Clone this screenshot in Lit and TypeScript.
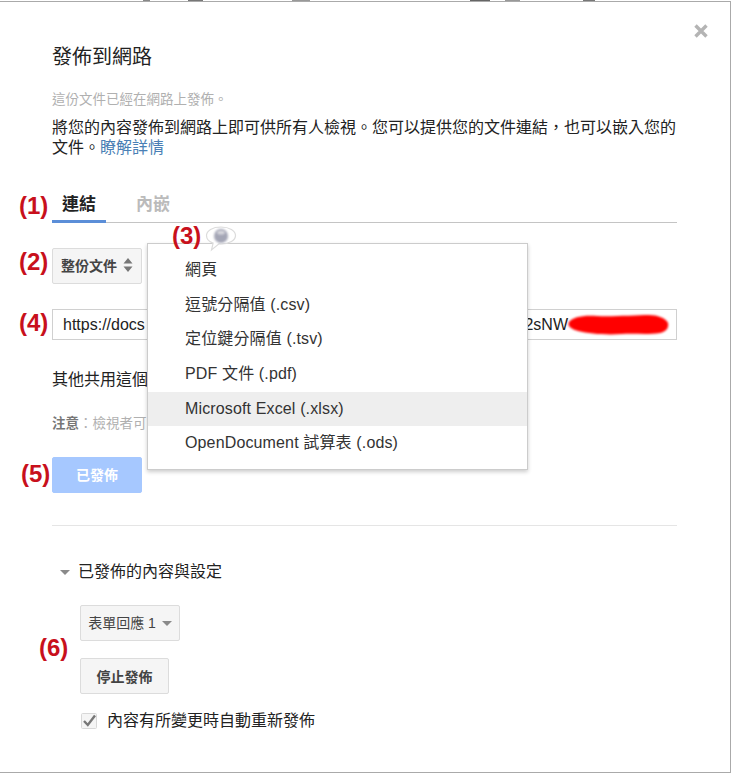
import { LitElement, html, css } from 'lit';
import { customElement } from 'lit/decorators.js';

const MENU_ITEMS = [
  '網頁',
  '逗號分隔值 (.csv)',
  '定位鍵分隔值 (.tsv)',
  'PDF 文件 (.pdf)',
  'Microsoft Excel (.xlsx)',
  'OpenDocument 試算表 (.ods)',
];

const MARKERS = [
  { label: '(1)', x: 19, y: 192 },
  { label: '(2)', x: 19, y: 248 },
  { label: '(3)', x: 172, y: 222 },
  { label: '(4)', x: 19, y: 309 },
  { label: '(5)', x: 21, y: 460 },
  { label: '(6)', x: 39, y: 634 },
];

@customElement('app-root')
export class AppRoot extends LitElement {
  static styles = css`
    :host {
      display: block;
      width: 732px;
      height: 773px;
      position: relative;
      overflow: hidden;
      background: #fff;
      font-family: 'Liberation Sans', 'Noto Sans CJK TC', sans-serif;
      color: #222;
    }

    .dialog {
      box-sizing: border-box;
      width: 731px;
      height: 772px;
      margin-top: 1px;
      padding: 43px 53px 0 52px;
      border-top: 1px solid #aaa;
      border-right: 1px solid #aaa;
      border-bottom: 1px solid #aaa;
      display: flex;
      flex-direction: column;
    }

    .title {
      font-size: 20px;
      line-height: 24px;
      color: #222;
    }

    .status {
      margin-top: 21px;
      font-size: 13.5px;
      line-height: 20px;
      color: #b0b0b0;
    }

    .intro {
      margin-top: 8px;
      font-size: 16px;
      line-height: 20px;
      color: #222;
    }

    .intro a {
      color: #4a7fb5;
      text-decoration: none;
    }

    .tabs {
      margin-top: 25px;
      height: 40px;
      box-sizing: border-box;
      display: flex;
      gap: 20px;
      border-bottom: 1px solid #c4c4c4;
    }

    .tab {
      box-sizing: border-box;
      height: 40px;
      padding: 0 10px;
      font-size: 17px;
      line-height: 44px;
      font-weight: 700;
      color: #bbb;
    }

    .tab.active {
      width: 54px;
      white-space: nowrap;
      color: #222;
      border-bottom: 3px solid #5b8ed8;
    }

    .btn {
      box-sizing: border-box;
      height: 36px;
      display: flex;
      align-items: center;
      justify-content: center;
      gap: 6px;
      padding-bottom: 2px;
      border: 1px solid #dcdcdc;
      border-radius: 2px;
      background: #f5f5f5;
      color: #444;
      font-size: 14px;
      font-weight: 700;
    }

    .scope {
      margin-top: 25px;
      width: 90px;
    }

    .url {
      box-sizing: border-box;
      margin-top: 25px;
      height: 31px;
      padding: 0 108px 0 10px;
      display: flex;
      justify-content: space-between;
      align-items: center;
      border: 1px solid #d0d0d0;
      font-size: 16px;
      color: #222;
      white-space: nowrap;
    }

    .shared {
      margin-top: 30px;
      font-size: 16px;
      line-height: 20px;
    }

    .note {
      margin-top: 24px;
      font-size: 13.5px;
      line-height: 20px;
      color: #b0b0b0;
    }

    .note b {
      color: #777;
    }

    .publish {
      margin-top: 23px;
      width: 90px;
      background: #a6c8ff;
      border-color: #a6c8ff;
      color: #fff;
    }

    hr {
      width: 100%;
      margin: 32px 0 0;
      border: 0;
      border-top: 1px solid #e5e5e5;
    }

    .section {
      margin-top: 36px;
      display: flex;
      align-items: center;
      height: 20px;
      font-size: 16px;
      line-height: 20px;
    }

    .arrow {
      width: 0;
      height: 0;
      border-left: 5px solid transparent;
      border-right: 5px solid transparent;
      border-top: 5px solid #8a8a8a;
    }

    .section .arrow {
      margin: 0 8px 0 8px;
    }

    .settings {
      padding-left: 28px;
      display: flex;
      flex-direction: column;
      align-items: flex-start;
    }

    .sheet {
      margin-top: 23px;
      width: 100px;
      font-weight: 400;
    }

    .sheet .arrow {
      margin-top: 2px;
    }

    .stop {
      margin-top: 17px;
      width: 89px;
      padding-bottom: 0;
    }

    .auto {
      margin-top: 17px;
      display: flex;
      align-items: center;
      gap: 10px;
      font-size: 16px;
      line-height: 20px;
    }

    .check {
      width: 16px;
      height: 16px;
      margin-left: 1px;
      display: block;
    }

    .close {
      position: absolute;
      left: 693px;
      top: 23px;
      width: 16px;
      height: 16px;
    }

    .menu {
      position: absolute;
      left: 147px;
      top: 243px;
      box-sizing: border-box;
      width: 381px;
      height: 227px;
      padding-top: 9px;
      background: #fff;
      border: 1px solid #ccc;
      box-shadow: 0 2px 4px rgba(0, 0, 0, 0.2);
      color: #333;
      font-size: 16px;
      letter-spacing: 0.14px;
    }

    .menu div {
      height: 34.7px;
      line-height: 34.7px;
      padding-left: 37px;
      white-space: nowrap;
    }

    .menu .hover {
      background: #eee;
    }

    .marker {
      position: absolute;
      font-size: 24px;
      line-height: 28px;
      font-weight: 700;
      color: #c8101c;
    }

    .bubble {
      position: absolute;
      left: 205px;
      top: 226px;
      width: 32px;
      height: 26px;
    }

    .blob {
      filter: blur(1px);
    }

    .smear {
      position: absolute;
      left: 563px;
      top: 311px;
      width: 110px;
      height: 26px;
    }

    .edge {
      position: absolute;
      left: 0;
      top: 0;
      width: 100%;
      height: 1px;
      background: linear-gradient(
        90deg,
        transparent 143px, #888 143px, #888 150px, transparent 150px,
        transparent 188px, #777 188px, #777 203px, transparent 203px,
        transparent 292px, #999 292px, #999 310px, transparent 310px,
        transparent 470px, #666 470px, #666 490px, transparent 490px,
        transparent 505px, #999 505px, #999 520px, transparent 520px,
        transparent 583px, #777 583px, #777 595px, transparent 595px
      );
    }
  `;

  render() {
    return html`
      <div class="edge"></div>
      <div class="dialog" lang="zh-TW">
        <div class="title">發佈到網路</div>
        <div class="status">這份文件已經在網路上發佈。</div>
        <div class="intro">
          <div>將您的內容發佈到網路上即可供所有人檢視。您可以提供您的文件連結&#xFF0C;也可以嵌入您的</div>
          <div>文件。<a href="#">瞭解詳情</a></div>
        </div>
        <div class="tabs">
          <div class="tab active">連結</div>
          <div class="tab">內嵌</div>
        </div>
        <div class="btn scope">
          整份文件
          <svg width="10" height="16" viewBox="0 0 10 16">
            <path d="M5 1 9.500 6.500H.5zM5 15 .5 9.500h9z" fill="#777" />
          </svg>
        </div>
        <div class="url"><span>https://docs</span><span>2sNW</span></div>
        <div class="shared">其他共用這個</div>
        <div class="note"><b>注意</b>&#xFF1A;檢視者可</div>
        <div class="btn publish">已發佈</div>
        <hr />
        <div class="section"><span class="arrow"></span>已發佈的內容與設定</div>
        <div class="settings">
          <div class="btn sheet">表單回應 1 <span class="arrow"></span></div>
          <div class="btn stop">停止發佈</div>
          <div class="auto">
            <svg class="check" viewBox="0 0 16 16">
              <rect x=".5" y=".5" width="15" height="15" rx="1" fill="#f5f5f5" stroke="#d8d8d8" />
              <path d="M3 8 6.800 12 14 2.500" fill="none" stroke="#777" stroke-width="2.400" />
            </svg>
            內容有所變更時自動重新發佈
          </div>
        </div>
      </div>

      <svg class="close" viewBox="0 0 16 16">
        <path d="M2.500 2.500 13.500 13.500M13.500 2.500 2.500 13.500" stroke="#b4b4b4" stroke-width="3.400" />
      </svg>

      <svg class="smear" viewBox="0 0 110 26">
        <path
          d="M6 11C10 6 20 4 34 5S72 4 86 4c8 0 17 3 19 8 1 5-2 9-8 10-14 2-26 0-38 1-15 1-32 0-44-3C8 18 4 15 6 11z"
          fill="#ff0000"
          class="blob"
        />
      </svg>

      <div class="menu">
        ${MENU_ITEMS.map(
          (item, i) => html`<div class=${i === 4 ? 'hover' : ''}>${item}</div>`
        )}
      </div>

      <svg class="bubble" viewBox="0 0 32 26">
        <path
          d="M16 1C7.500 1 1.500 4.600 1.500 9.500c0 3.600 3 6.400 6.600 7.600L6.500 24l7.500-6.100c.7 0 1.300.1 2 .1 8.500 0 14.500-3.700 14.500-8.500S24.500 1 16 1z"
          fill="#fff"
          stroke="#dcdcdc"
          stroke-width="1.200"
        />
        <circle class="blob" cx="16" cy="10" r="7" fill="#a4a6b6" />
        <ellipse class="blob" cx="16" cy="6.500" rx="4" ry="2" fill="#d8d8de" />
      </svg>

      ${MARKERS.map(
        (m) => html`<div class="marker" style="left:${m.x}px;top:${m.y}px">${m.label}</div>`
      )}
    `;
  }
}
